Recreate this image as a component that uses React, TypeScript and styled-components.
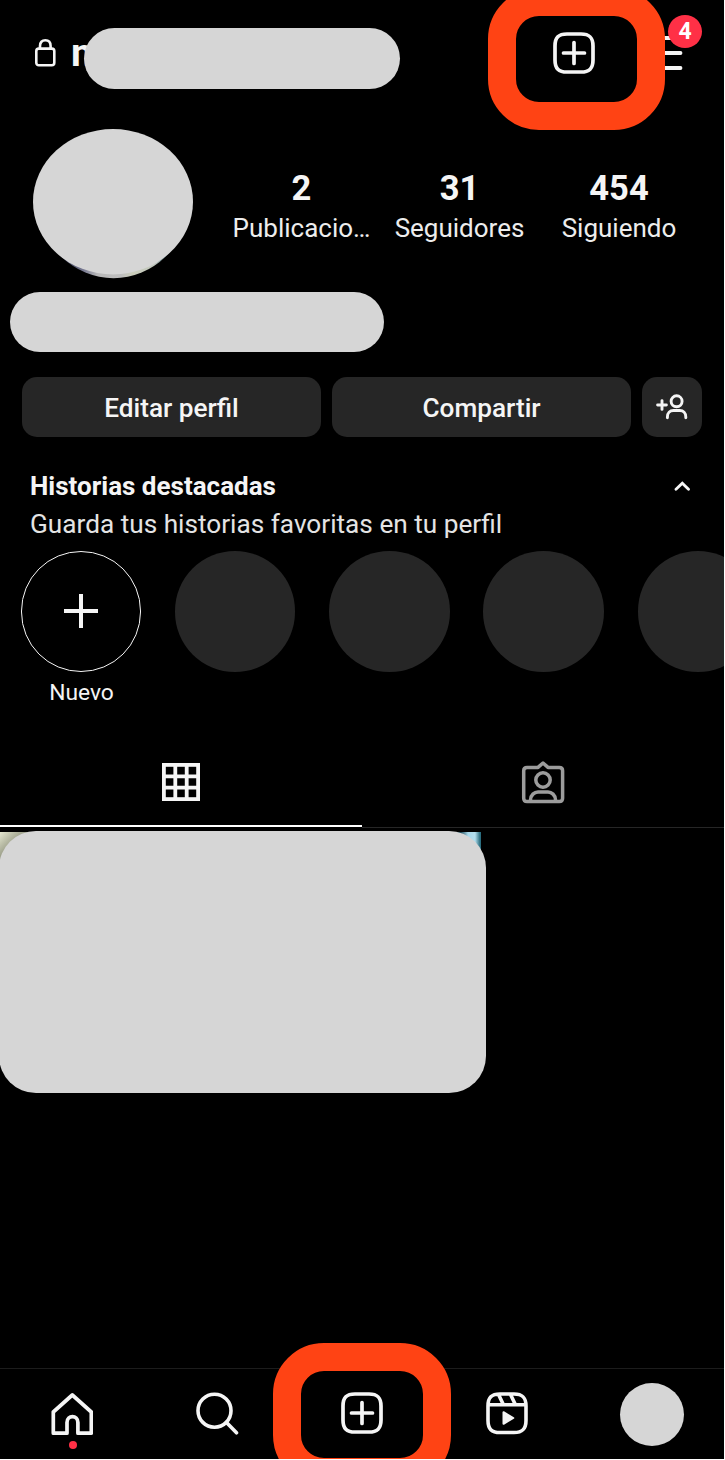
import React from "react";
import styled, { createGlobalStyle } from "styled-components";

const GlobalStyle = createGlobalStyle`
  html, body { margin: 0; background: #fff; }
  body { overflow: hidden; }
  * { box-sizing: border-box; }
  svg { display: block; }
`;

const Screen = styled.div`
  position: relative;
  width: 724px;
  height: 1459px;
  overflow: hidden;
  background: #000;
  color: #f5f5f5;
  font-family: Roboto, "Liberation Sans", sans-serif;
  display: flex;
  flex-direction: column;
`;

const Header = styled.header`
  position: relative;
  height: 129px;
  flex: none;
  display: flex;
  align-items: flex-start;
  padding: 32px 41px 0 34px;
`;

const LockSlot = styled.div`
  width: 37px;
  padding-top: 6px;
`;

const Username = styled.h1`
  margin: 0;
  flex: 1;
  font-size: 39px;
  line-height: 43px;
  font-weight: 700;
`;

const HeaderActions = styled.div`
  display: flex;
  gap: 50px;
`;

const Cover = styled.div<{ $x: number; $y: number; $w: number; $h: number; $r: number }>`
  position: absolute;
  left: ${(p) => p.$x}px;
  top: ${(p) => p.$y}px;
  width: ${(p) => p.$w}px;
  height: ${(p) => p.$h}px;
  border-radius: ${(p) => p.$r}px;
  background: #d6d6d6;
`;

const Ring = styled.div<{ $x: number; $y: number; $w: number; $h: number }>`
  position: absolute;
  left: ${(p) => p.$x}px;
  top: ${(p) => p.$y}px;
  width: ${(p) => p.$w}px;
  height: ${(p) => p.$h}px;
  border: 28px solid #ff4314;
  border-radius: 51px;
`;

const Badge = styled.span`
  position: absolute;
  left: 668px;
  top: 15px;
  width: 34px;
  height: 33px;
  border-radius: 50%;
  background: #ff3046;
  color: #fff;
  font-size: 23px;
  line-height: 34px;
  font-weight: 700;
  text-align: center;
`;

const Profile = styled.section`
  height: 163px;
  flex: none;
  display: flex;
  padding-left: 33px;
`;

const Stats = styled.div`
  display: grid;
  grid-template-columns: 159px 157px 162px;
  padding: 40px 0 0 29px;
`;

const Stat = styled.div`
  display: flex;
  flex-direction: column;
  align-items: center;
`;

const StatValue = styled.strong`
  font-size: 34.5px;
  line-height: 38px;
  font-weight: 700;
`;

const StatLabel = styled.span`
  margin-top: 5px;
  font-size: 26px;
  line-height: 32px;
  color: #ededed;
`;

const NamePill = styled.div`
  width: 374px;
  height: 60px;
  flex: none;
  margin-left: 10px;
  border-radius: 30px;
  background: #d6d6d6;
`;

const Actions = styled.div`
  display: grid;
  grid-template-columns: 299px 299px 60px;
  gap: 11px;
  flex: none;
  height: 60px;
  margin: 25px 22px 0;
`;

const Button = styled.button`
  display: flex;
  align-items: center;
  justify-content: center;
  padding: 2px 0 0;
  border: 0;
  border-radius: 15px;
  background: #262626;
  color: #f5f5f5;
  font: 500 26.2px/32px Roboto, sans-serif;
`;

const IconButton = styled(Button)`
  padding: 0;
`;

const Highlights = styled.section`
  height: 114px;
  flex: none;
  display: flex;
  justify-content: space-between;
  padding: 32px 34px 0 30px;
`;

const HighlightTitle = styled.h2`
  margin: 0;
  font-size: 26px;
  line-height: 34px;
  font-weight: 700;
`;

const HighlightText = styled.p`
  margin: 4px 0 0;
  font-size: 26.2px;
  line-height: 34px;
  color: #e4e4e4;
`;

const ChevronSlot = styled.div`
  padding-top: 12px;
`;

const Stories = styled.div`
  height: 189px;
  flex: none;
  display: grid;
  grid-template-columns: repeat(5, 120.5px);
  gap: 33.7px;
  padding-left: 20.8px;
`;

const Story = styled.div`
  display: flex;
  flex-direction: column;
  align-items: center;
`;

const StoryCircle = styled.div<{ $empty?: boolean }>`
  width: 120.5px;
  height: 120.5px;
  display: flex;
  align-items: center;
  justify-content: center;
  border-radius: 50%;
  border: ${(p) => (p.$empty ? "1.5px solid #f5f5f5" : "0")};
  background: ${(p) => (p.$empty ? "transparent" : "#262626")};
`;

const StoryLabel = styled.span`
  margin-top: 7px;
  padding-left: 1px;
  font-size: 22.8px;
  line-height: 28px;
`;

const Tabs = styled.div`
  height: 92px;
  flex: none;
  display: grid;
  grid-template-columns: 1fr 1fr;
`;

const Tab = styled.div<{ $active?: boolean }>`
  display: flex;
  justify-content: center;
  padding-top: ${(p) => (p.$active ? 23 : 21)}px;
  height: ${(p) => (p.$active ? 87 : 88)}px;
  border-bottom: ${(p) => (p.$active ? "2px solid #fff" : "1px solid #262626")};
`;

const Gallery = styled.main`
  position: relative;
  flex: 1;
  display: grid;
  grid-template-columns: 240px 240px;
  grid-auto-rows: 240px;
  gap: 1px;
`;

const Photo = styled.div<{ $bg: string }>`
  background: ${(p) => p.$bg};
`;

const Nav = styled.nav`
  position: relative;
  height: 91px;
  flex: none;
  display: grid;
  grid-template-columns: repeat(5, 1fr);
  border-top: 1px solid #1c1c1c;
`;

const NavItem = styled.div<{ $top: number }>`
  display: flex;
  flex-direction: column;
  align-items: center;
  padding-top: ${(p) => p.$top}px;
`;

const Dot = styled.i`
  width: 8px;
  height: 8px;
  margin: 5px 0 0 1px;
  border-radius: 50%;
  background: #ff3046;
`;

const NavAvatar = styled.div`
  width: 64px;
  height: 63px;
  border-radius: 50%;
  background: #d6d6d6;
`;

const ink = "#f5f5f5";

const PlusSquare = () => (
  <svg width="42" height="42" viewBox="0 0 42 42" fill="none" stroke={ink} strokeWidth="3.7" strokeLinecap="round">
    <path d="M2 14C2 5.5 5.5 2 14 2h14c8.500 0 12 3.500 12 12v14c0 8.500-3.500 12-12 12H14C5.500 40 2 36.500 2 28z" />
    <path d="M21 10.500v21M10.500 21h21" />
  </svg>
);

const Lock = () => (
  <svg width="22" height="29" viewBox="0 0 22 29" fill="none" stroke={ink} strokeWidth="2.6">
    <rect x="2.300" y="10.600" width="18" height="16.700" rx="2.500" />
    <path d="M6 10.300V8C6 4.200 8 2.300 11.300 2.300S16.600 4.200 16.600 8v2.300" />
  </svg>
);

const Menu = () => (
  <svg width="38" height="42" viewBox="0 0 38 42" stroke={ink} strokeWidth="3.800" strokeLinecap="round">
    <path d="M2 6h33.500M2 21h33.500M2 36h33.500" />
  </svg>
);

const Avatar = () => (
  <svg width="160" height="150" viewBox="0 0 160 150">
    <defs>
      <linearGradient id="rim" x1="30" x2="132" y1="0" y2="0" gradientUnits="userSpaceOnUse">
        <stop offset="0" stopColor="#424761" />
        <stop offset=".2" stopColor="#777991" />
        <stop offset=".34" stopColor="#b9b9b9" />
        <stop offset=".57" stopColor="#bebebe" />
        <stop offset=".68" stopColor="#cbcdbb" />
        <stop offset=".9" stopColor="#c0c7be" />
        <stop offset="1" stopColor="#53727a" />
      </linearGradient>
    </defs>
    <circle cx="80.500" cy="75.700" r="73.500" fill="url(#rim)" />
    <ellipse cx="80" cy="72.700" rx="80" ry="72.700" fill="#d6d6d6" />
  </svg>
);

const AddPerson = () => (
  <svg width="32" height="26" viewBox="0 0 32 26" fill="none" stroke={ink} strokeWidth="2.900" strokeLinecap="round">
    <circle cx="20.600" cy="7.300" r="5.500" />
    <path d="M11.400 23.700v-.7c0-4.200 2.500-6.500 6-6.500h6.400c3.500 0 6 2.300 6 6.500v.7M1.600 11h8.800M6 6.600v8.800" />
  </svg>
);

const Chevron = () => (
  <svg width="16" height="11" viewBox="0 0 16 11" fill="none" stroke={ink} strokeWidth="2.800" strokeLinecap="round">
    <path d="M2 8.300 8.300 2.200l6.200 6.100" />
  </svg>
);

const Plus = () => (
  <svg width="34" height="34" viewBox="0 0 34 34" stroke={ink} strokeWidth="4">
    <path d="M17 0v34M0 17h34" />
  </svg>
);

const GridIcon = () => (
  <svg width="38" height="38" viewBox="0 0 38 38" fill="none" stroke={ink} strokeWidth="3.800">
    <rect x="1.900" y="1.900" width="34.200" height="34.200" />
    <path d="M13.300 1v36M24.700 1v36M1 13.300h36M1 24.700h36" />
  </svg>
);

const Tagged = () => (
  <svg width="44" height="43" viewBox="0 0 44 43" fill="none" stroke="#9c9c9c" strokeWidth="3.500" strokeLinejoin="round">
    <path d="M17 6.400H6Q2.700 6.400 2.700 9.700v27.500Q2.700 40.500 6 40.500h32.300q3.300 0 3.300-3.300V9.700q0-3.300-3.300-3.300H27L22 2z" />
    <circle cx="22" cy="19" r="7.200" />
    <path d="M9.500 39.500v-.5c0-5 4-8 7.500-8h10c3.500 0 7.500 3 7.500 8v.5" />
  </svg>
);

const Home = () => (
  <svg width="42" height="43" viewBox="0 0 42 43" fill="none" stroke={ink} strokeWidth="3.700" strokeLinejoin="round">
    <path d="M16 40.200H2.300V19L21.300 2l19 17v21.200H26.900V29.500c0-7.800-10.900-7.800-10.900 0z" />
  </svg>
);

const Search = () => (
  <svg width="43" height="43" viewBox="0 0 43 43" fill="none" stroke={ink} strokeWidth="3.600" strokeLinecap="round">
    <circle cx="18.500" cy="18.700" r="16.500" />
    <path d="m30.500 30.500 10 10.300" />
  </svg>
);

const Reels = () => (
  <svg width="42" height="43" viewBox="0 0 42 43" fill="none" stroke={ink} strokeWidth="3.600">
    <path d="M2 14C2 5.500 5.500 2 14 2h14c8.500 0 12 3.500 12 12v14.500c0 8.500-3.500 12-12 12H14C5.500 40.500 2 37 2 28.500zM2 12.800h38M12.300 2l5 10.500M24.300 2l5 10.500" />
    <path d="M17.500 20.200v11.600l9.800-5.800z" fill={ink} stroke={ink} strokeWidth="2" strokeLinejoin="round" />
  </svg>
);

export default function App() {
  return (
    <>
      <GlobalStyle />
      <Screen>
        <Header>
          <LockSlot><Lock /></LockSlot>
          <Username>m</Username>
          <HeaderActions>
            <PlusSquare />
            <Menu />
          </HeaderActions>
          <Cover $x={84} $y={28} $w={316} $h={61} $r={30.5} />
          <Ring $x={488} $y={-12} $w={177} $h={142} />
          <Badge>4</Badge>
        </Header>
        <Profile>
          <Avatar />
          <Stats>
            <Stat><StatValue>2</StatValue><StatLabel>Publicacio…</StatLabel></Stat>
            <Stat><StatValue>31</StatValue><StatLabel>Seguidores</StatLabel></Stat>
            <Stat><StatValue>454</StatValue><StatLabel>Siguiendo</StatLabel></Stat>
          </Stats>
        </Profile>
        <NamePill />
        <Actions>
          <Button>Editar perfil</Button>
          <Button>Compartir</Button>
          <IconButton aria-label="Descubrir personas"><AddPerson /></IconButton>
        </Actions>
        <Highlights>
          <div>
            <HighlightTitle>Historias destacadas</HighlightTitle>
            <HighlightText>Guarda tus historias favoritas en tu perfil</HighlightText>
          </div>
          <ChevronSlot><Chevron /></ChevronSlot>
        </Highlights>
        <Stories>
          <Story>
            <StoryCircle $empty><Plus /></StoryCircle>
            <StoryLabel>Nuevo</StoryLabel>
          </Story>
          {[0, 1, 2, 3].map((i) => (
            <Story key={i}><StoryCircle /></Story>
          ))}
        </Stories>
        <Tabs>
          <Tab $active><GridIcon /></Tab>
          <Tab><Tagged /></Tab>
        </Tabs>
        <Gallery>
          <Photo $bg="linear-gradient(135deg, #e4e6cf, #777b66 8%, #000 40%)" />
          <Photo $bg="linear-gradient(90deg, #1c4a58 220px, #a9d8ea 227px, #b5dfee 234px, #2b6e80 239px)" />
          <Cover $x={-1} $y={-1} $w={487} $h={262} $r={37} />
        </Gallery>
        <Nav>
          <NavItem $top={24}><Home /><Dot /></NavItem>
          <NavItem $top={23}><Search /></NavItem>
          <NavItem $top={23}><PlusSquare /></NavItem>
          <NavItem $top={23}><Reels /></NavItem>
          <NavItem $top={14}><NavAvatar /></NavItem>
          <Ring $x={273} $y={-26} $w={178} $h={143} />
        </Nav>
      </Screen>
    </>
  );
}
